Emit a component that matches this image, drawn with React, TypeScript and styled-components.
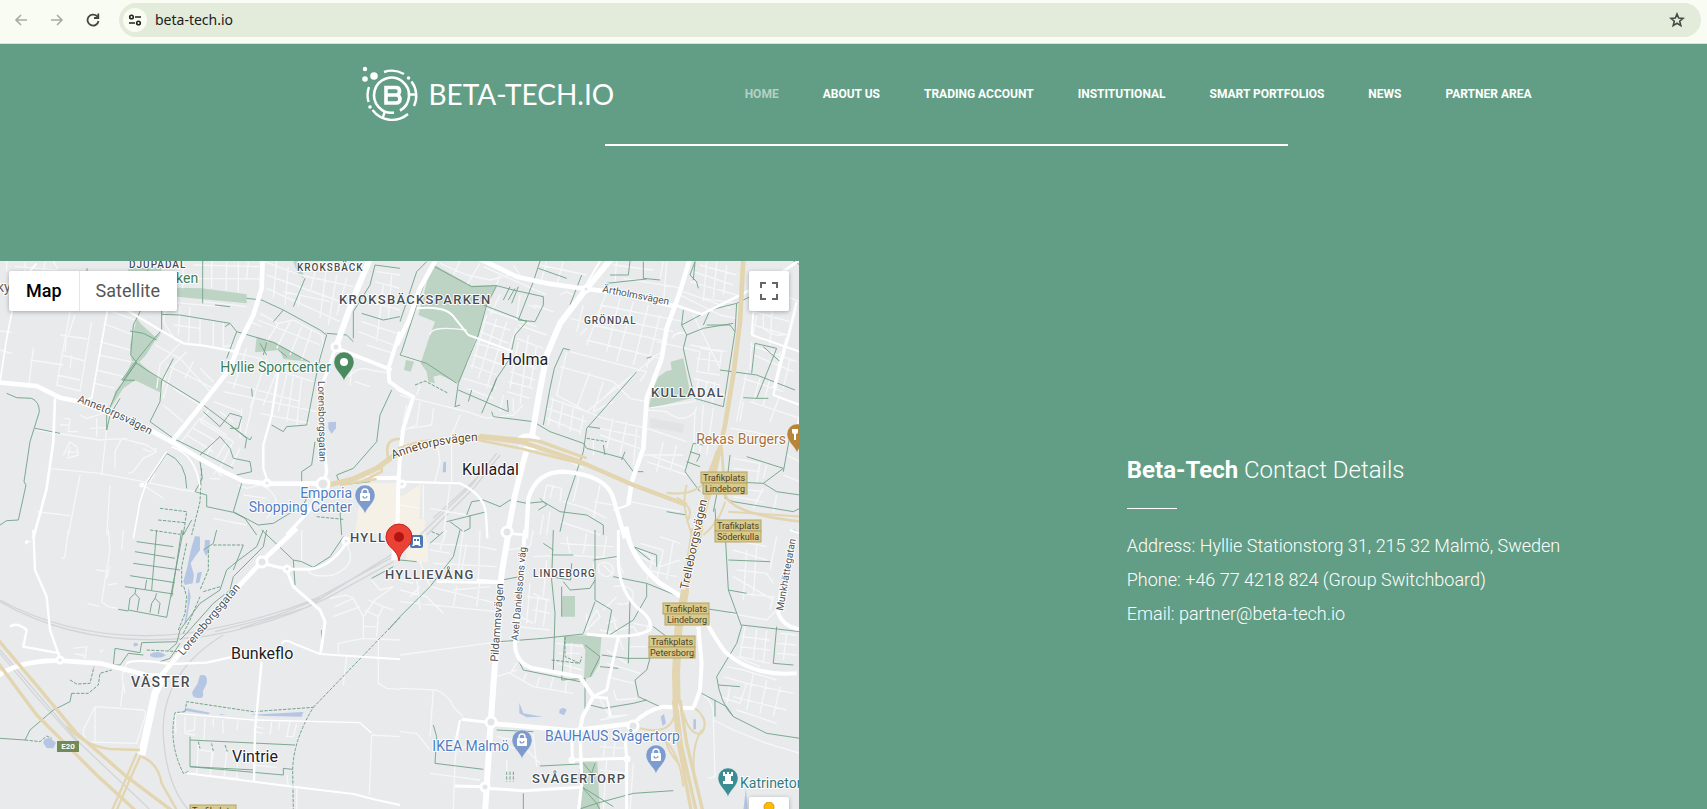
import React from 'react';
import styled, { createGlobalStyle } from 'styled-components';

const GlobalStyle = createGlobalStyle`
  * { box-sizing: border-box; }
  body { margin: 0; background: #629e85; font-family: Roboto, "Liberation Sans", sans-serif; }
  button { border: 0; padding: 0; background: none; font: inherit; cursor: pointer; }
  a { color: inherit; text-decoration: none; }
`;

const Page = styled.div`
  display: flex;
  flex-direction: column;
  min-height: 100vh;
`;

/* Browser bar */

const BrowserBar = styled.div`
  display: flex;
  align-items: center;
  height: 44px;
  padding: 0 6px 4px 8px;
  background: #f9fcf2;
  border-bottom: 1px solid #dbe5d6;
`;

const BarButton = styled.button<{ $muted?: boolean }>`
  display: grid;
  place-items: center;
  width: 26px;
  height: 28px;
  margin-right: 10px;
  color: ${(p) => (p.$muted ? '#a5aca0' : '#3f4a3c')};
`;

const AddressBar = styled.div`
  display: flex;
  flex: 1;
  align-items: center;
  height: 34px;
  margin-left: 3px;
  padding: 0 12px 0 4px;
  border-radius: 17px;
  background: #e3ebdb;
`;

const SiteInfo = styled.button`
  display: grid;
  place-items: center;
  width: 24px;
  height: 24px;
  border-radius: 50%;
  background: #f9fcf2;
`;

const AddressInput = styled.input`
  flex: 1;
  min-width: 0;
  margin-left: 8px;
  padding: 0;
  border: 0;
  outline: 0;
  background: transparent;
  color: #1c211b;
  font: 14px/20px "Noto Sans", "Open Sans", sans-serif;
`;

const StarButton = styled.button`
  display: grid;
  place-items: center;
  width: 24px;
  height: 24px;
`;

/* Site header */

const Header = styled.header`
  display: flex;
  flex-direction: column;
  align-items: center;
  padding-left: 186px;
  height: 217px;
`;

const HeaderRow = styled.div`
  display: flex;
  align-items: center;
  justify-content: space-between;
  width: 100%;
  max-width: 1170px;
  height: 100px;
`;

const Brand = styled.a`
  display: flex;
  align-items: center;
  gap: 9px;
  color: #fff;
  font: 28px/60px Lato, sans-serif;
`;

const Nav = styled.nav`
  display: flex;
  gap: 44px;
`;

const NavLink = styled.a<{ $active?: boolean }>`
  color: ${(p) => (p.$active ? '#b5d0c4' : '#fff')};
  font-size: 12px;
  line-height: 20px;
  font-weight: 700;
  text-transform: uppercase;
  white-space: nowrap;
`;

const HeaderRule = styled.hr`
  width: 40vw;
  height: 2px;
  margin: 0;
  border: 0;
  background: #fff;
`;

/* Map and contact */

const Main = styled.main`
  display: grid;
  grid-template-columns: 799fr 908fr;
  flex: 1;
  min-height: 400px;
`;

const MapPanel = styled.section`
  position: relative;
  overflow: hidden;
  background: #e8eaec;
`;

const MapSvg = styled.svg`
  position: absolute;
  inset: 0;
  width: 100%;
  height: 100%;
  font-family: Roboto, sans-serif;
`;

const MapTypes = styled.div`
  position: absolute;
  top: 10px;
  left: 9px;
  display: flex;
  border-radius: 2px;
  background: #fff;
  box-shadow: 0 1px 4px rgba(0, 0, 0, 0.3);
`;

const MapTypeButton = styled.button<{ $active?: boolean }>`
  height: 40px;
  padding: 0 17px 2px;
  color: ${(p) => (p.$active ? '#000' : '#565656')};
  font-size: 18px;
  font-weight: ${(p) => (p.$active ? 500 : 400)};
  & + & {
    padding-left: 16px;
    border-left: 1px solid #e6e6e6;
  }
`;

const MapControl = styled.button<{ $top?: boolean }>`
  position: absolute;
  right: 10px;
  ${(p) => (p.$top ? 'top: 10px;' : 'bottom: -28px;')}
  display: grid;
  place-items: center;
  width: 40px;
  height: 40px;
  border-radius: 2px;
  background: #fff;
  box-shadow: 0 1px 4px rgba(0, 0, 0, 0.3);
`;

const Contact = styled.section`
  padding: 192px 24px 0 36.1%;
  color: #fff;
  font-weight: 300;
`;

const ContactTitle = styled.h2`
  margin: 0;
  font-size: 24px;
  line-height: 34px;
  font-weight: 300;
  strong { font-weight: 700; }
`;

const ContactRule = styled.hr`
  width: 50px;
  height: 1px;
  margin: 21px 0 20px;
  border: 0;
  background: #fff;
`;

const ContactLine = styled.p`
  margin: 0;
  font-size: 18px;
  line-height: 34px;
`;

/* Map data: each tile is drawn on its own 1200-unit grid */

type Stroke = [width: number, d: string];
interface Tile {
  x: number;
  y: number;
  parks: string[];
  water: string[];
  rail: string[];
  paths: string[];
  dashed: string[];
  minor: string[];
  roads: Stroke[];
  highways: Stroke[];
}

const tiles: Tile[] = [
  {
    x: 0,
    y: 255,
    parks: [
      'M530 98 L605 100 L740 118 L740 145 L530 125Z',
      'M385 38 L485 38 L480 60 L385 60Z',
      'M410 195 L470 250 L438 300 L418 322 L395 318 L390 270Z',
      'M395 322 L418 322 L445 345 L485 378 L480 412 L405 376 L370 400 L330 462 L345 410 L368 380Z',
      'M410 190 L425 210 L400 300 L392 270Z M485 232 L468 256 L458 250Z',
      'M770 245 L825 262 L930 320 L850 312 L840 285 L765 292Z',
      'M890 15 L905 35 L912 70 L895 60 L880 20Z',
    ],
    water: ['M985 502 L1008 500 L1008 520 L995 536 L985 522Z'],
    rail: [],
    paths: [
      'M20 415 L50 428 L95 430 Q118 440 118 470 L90 560 L72 680 L78 690 L55 795 L20 797 L0 810',
      'M445 18 L440 130 L400 210 L392 300 L410 322 L350 410 L320 480 L320 525 L330 480 L360 430',
      'M485 60 L485 225 L455 260 L405 322 L440 345 L610 450 L690 510 L750 555 L755 545',
      'M485 178 L540 180 L690 205 L710 230 L820 262 L930 322',
      'M740 130 L785 135 L850 165 L960 225 L980 240 L960 310 L945 380 L920 510 L860 515 L850 530 L815 510',
      'M980 235 L1040 240 L1060 260 M850 165 L820 200',
      'M915 70 L880 155 M1125 30 L1110 90 L1060 170 L1060 250 M1125 30 L1200 40',
      'M1085 175 L1150 195 L1200 185',
      'M485 378 L520 310 M485 378 L480 440 L450 500 L520 550 L700 640',
      'M610 470 L660 515 L690 475 L725 485 L715 520 L690 520 M690 510 L740 550 L735 580',
      'M600 600 L660 545 L690 580 L700 610 L750 620 L755 650 L710 660',
      'M1175 405 L1140 480 L1130 560 L1060 640 L1010 660 L1020 690 L1110 680',
      'M945 560 L935 630 L905 650 L905 680',
      'M500 595 L440 685 M500 595 Q560 620 560 700 M725 685 L700 770 L775 810 L820 805 L910 750 L930 710',
      'M600 620 L607 670 L585 710 L620 720 L620 755 L700 772 L735 790 L770 840 M105 520 L180 535',
      'M710 230 L680 310 M690 205 L675 215 M410 322 L370 375 M405 322 L365 375 L405 376',
      'M755 400 L757 425 M608 18 L608 145 M262 40 L258 60 M390 228 L430 235 L470 255',
      'M780 265 L800 300 M835 285 L860 305 M800 262 L790 300',
      'M575 795 L550 840 M645 150 L690 155 M1020 770 L1025 840',
    ],
    dashed: [
      'M605 640 L600 740 L575 840 M480 760 L560 770 L550 840 M475 795 L555 803 M450 825 L540 838',
      'M950 785 L1030 793',
    ],
    minor: [
      'M0 228 L35 232 M0 285 L35 295 M210 170 L170 390 L240 408 L275 200 M180 240 L262 252 M185 300 L255 318 M172 360 L240 375 M225 180 L205 240 M90 315 L190 330',
      'M200 240 L195 290 M215 300 L210 340 M100 280 L85 400 M20 18 L20 50 M45 35 L170 45 M75 20 L75 48 M135 20 L130 48 M160 18 L175 45',
      'M310 205 L400 240 M300 260 L390 285 M295 300 L390 320 M290 345 L370 365 M285 385 L345 400 M335 170 L405 195',
      'M530 70 L790 72 M510 20 L505 45 M550 18 L548 100 M635 18 L635 100 M680 20 L678 105 M715 20 L715 110 M745 20 L740 75 M610 140 L740 155 M580 30 L780 35',
      'M500 150 L490 200 L530 260 M540 150 L535 240 M570 155 L565 265 M600 190 L600 270 M640 195 L640 272 M490 140 L660 155 M670 200 L670 275 L700 270 M520 210 L600 220',
      'M780 175 L835 205 L880 195 L965 240 L970 265 L955 330 M835 205 L800 260 M870 200 L830 280 M905 215 L870 300 M935 225 L905 315 M775 195 L960 270 M750 200 L785 215',
      'M795 20 L900 60 L1060 95 M800 60 L1050 150 M830 18 L820 130 M865 35 L855 150 M950 30 L930 110 M980 30 L960 190 M1010 60 L985 210 M1040 70 L1010 180 M800 100 L1020 200 M850 110 L990 140 M900 100 L895 155',
      'M1110 140 L1200 165 M1125 80 L1200 100 M1085 200 L1190 235 M1075 230 L1180 270 M1130 50 L1200 60 M1150 90 L1130 260 M1175 60 L1165 190 M1100 270 L1180 295',
      'M690 290 L780 310 L830 345 L940 380 M700 320 L690 350 M740 280 L700 400 M800 310 L750 460 M830 350 L790 450 M860 360 L835 470 M880 365 L860 500 M905 370 L890 510 M670 410 L950 470 M640 440 L720 470 M680 380 L900 440 M660 470 L700 500 M725 460 L720 550 M765 420 L735 540 M780 475 L930 505',
      'M560 290 L520 330 L490 430 M540 265 L480 330 L470 400 M500 330 L640 400 M580 320 L555 370 M600 340 L640 380 M520 400 L600 450 M490 450 L550 500 M500 350 L480 420 M540 310 L630 410 M465 270 L540 310',
      'M540 565 L600 490 L680 540 M560 540 L640 590 M580 520 L650 560 M600 500 L700 560 L660 640 M620 600 L640 560 M650 610 L680 560 M690 640 L720 580 M630 460 L600 500',
      'M240 480 L260 490 L310 475 M190 490 L210 492 L205 530 L235 530 M180 510 L205 510 M110 525 L300 555 L380 550 M290 490 L290 545 M270 520 L320 518',
      'M190 600 L210 560 L230 575 L235 600 L200 610 M200 590 L230 592 M210 575 L205 605 M320 520 L305 660 M145 640 L300 655 L430 680 L550 705 L600 712 M365 550 L345 590 L345 640 M365 550 L440 570 L470 590 L430 610 L400 650 L385 655 M430 580 Q450 600 470 580',
      'M110 770 L210 782 M240 660 L205 840 M330 690 L320 840 M640 660 L650 645 L665 665 M630 670 L660 672 M715 690 L740 700 L780 690 Q830 710 830 750 L800 790 M800 730 L730 720 M465 655 L450 680 M430 690 L490 730',
      'M640 790 L740 810 M1060 300 L1050 390 M1065 380 L1110 395 M1045 365 Q1080 330 1110 345 L1170 355',
    ],
    roads: [
      [14, 'M-10 382 L110 393 L180 428 L240 440 L440 520 L520 563 L590 605 L660 645 L730 678 L800 686 L950 686'],
      [14, 'M788 10 L785 100 L760 180 L720 260 L690 340 L620 430 L515 560'],
      [18, 'M1110 10 L1060 130 L1008 275'],
      [10, 'M1008 275 L985 340 L962 400 L970 560 L980 650 L970 690 L925 770 L860 840'],
      [12, 'M1010 280 L1100 315 L1175 345 M1200 230 L1165 340 L1168 380 L1210 410'],
      [5, 'M50 100 L20 250 L0 380 M325 150 L275 430 M110 25 L45 100 M265 430 L275 430'],
      [8, 'M165 430 L160 560 L140 700 L100 850'],
      [7, 'M380 165 L480 225 L550 265 L610 272 L710 290'],
      [7, 'M835 350 L815 480 L790 570 L790 640 L805 685'],
      [5, 'M515 575 Q590 600 600 700 M500 590 L440 680 L420 740 L400 850'],
      [12, 'M1195 685 L1192 850 M1100 670 L1200 668'],
    ],
    highways: [
      [16, 'M985 690 L1060 672 L1130 640 L1210 582'],
      [8, 'M1090 678 L1145 650 L1145 635 M1165 610 Q1150 550 1200 552 M1020 690 L1130 672'],
    ],
  },
  {
    x: 400,
    y: 255,
    parks: [
      'M95 25 L215 92 L290 90 L255 160 L235 240 L175 385 L120 360 L100 365 L105 385 L85 380 L80 350 L62 325 L90 240 L105 200 L55 180Z',
      'M18 315 L42 320 L32 350 L12 345Z',
      'M812 320 L850 310 L868 400 L872 430 L745 462 L760 400 L775 365 L800 348 L815 345Z',
    ],
    water: ['M130 622 L138 620 L138 652 L128 652Z'],
    rail: ['M290 595 L215 690 L60 840 M300 600 L225 695 L80 840 M235 665 L100 790'],
    paths: [
      'M80 20 L50 50 L0 200 M95 30 L215 95 L290 92 L340 105 L430 125 L430 150 L405 200 L355 195 L400 80 L420 18',
      'M95 30 L60 120 L5 290 L0 300 M290 92 L260 150 L235 240 L175 385 L165 455',
      'M0 300 L80 325 L170 385 M250 150 L380 200 L345 240 L330 310 L290 370 L245 475',
      'M330 95 L310 135 M345 100 L325 135 M355 95 L335 145 M415 40 L500 70',
      'M175 405 L325 470 L322 435 M275 470 L280 485 L400 500 L450 530 L550 565 L560 580 L670 610 L700 650 L730 650',
      'M490 280 L463 340 L450 400 L430 510 M490 280 L510 285 M710 350 L560 520 L550 590 L500 740',
      'M545 60 L510 150 M690 18 L685 60 L630 60 M730 20 L730 70 L780 75 M885 20 L870 60 L890 80 L895 100 M885 20 L880 75',
      'M850 165 L845 210 L860 240 L850 280 L865 350 L885 430 L970 455 L1005 230 L990 210 L920 210',
      'M860 240 L910 220 L1000 205 M845 210 L930 165 L1010 145 L1050 125 M1010 145 L1005 230 M930 165 L910 210',
      'M960 345 L1070 360 L1185 405 M1065 265 L1055 355 M1065 265 L1130 280 L1070 430 L1030 428 M1070 430 L1105 430 M1090 275 L1140 320',
      'M880 565 L855 650 L900 710 M880 565 L910 570 M870 590 L900 600 L890 620 M860 620 L900 635',
      'M990 600 L975 730 L1000 740 L1180 770 M1040 605 L1150 640 L1090 685 L980 680 M1090 685 L1130 710 L1200 720 M1180 770 L1200 760 M1170 540 L1150 650',
      'M200 780 L215 740 L250 735 L300 755 L330 735 L380 745 L430 740 L480 770 L560 780 L610 810 L610 840 M140 800 L160 795 L260 770 M150 800 L190 830 L210 820 L210 780 M500 740 L480 830',
      'M420 730 L440 750 L415 765 M565 515 L600 520 M610 570 L615 600 M675 590 L665 615 M860 780 L800 770 M940 770 L950 720 M945 760 L950 840 M620 85 L740 72',
      'M215 405 L205 440 M180 450 L165 455 M290 370 L275 410 M740 310 L755 305 M1180 18 L1200 30',
    ],
    dashed: ['M45 390 L75 378 L145 415 M560 550 L620 560', 'M95 830 L120 840'],
    minor: [
      'M265 165 L410 215 M250 200 L330 225 M240 230 L325 265 M230 265 L320 290 M220 300 L310 330 M210 330 L290 360 M190 370 L290 400 M200 400 L280 430 M230 250 L200 330 M260 180 L215 340 M290 190 L235 370 M320 200 L260 400 M350 220 L310 330 M385 150 L410 160 M300 120 L270 180',
      'M355 210 L440 240 M350 250 L430 280 M340 320 L410 340 M330 350 L405 375 M325 380 L400 400 M320 410 L390 430 M355 260 L330 400 M385 240 L360 450 M310 420 L300 470 M340 430 L340 470 M410 270 L390 400 M370 300 L370 330',
      'M250 35 L440 120 M200 60 L270 75 L330 60 M180 18 L160 60 M240 25 L200 90 M300 60 L290 90 M120 25 L200 60 M340 30 L360 60 M440 20 L420 90 M490 20 L470 90 M420 30 L560 60 M0 140 L30 150 M400 150 L460 170 M480 120 L500 110 L520 120 M360 120 L350 190',
      'M600 150 L850 200 M590 180 L820 230 M580 210 L800 260 M560 255 L780 310 M510 290 L740 350 L720 380 M480 335 L640 380 L690 430 L740 440 M500 290 L470 420 L560 470 L610 490 L740 520 L860 560 M620 110 L560 270 M660 130 L620 290 M700 140 L650 320 M745 150 L700 330 M780 180 L740 340 M570 350 L530 460 M610 380 L580 470 L640 440 M650 390 L610 430 M560 470 L760 310',
      'M450 430 L560 470 M440 460 L560 500 M440 490 L540 530 M460 430 L445 510 M490 440 L475 520 M520 460 L510 530 M550 480 L540 540 M640 490 L620 580 M680 500 L660 600 M710 520 L700 630 M600 540 L720 580 M600 520 L720 545 M580 550 L580 600',
      'M540 240 L560 220 M530 230 L550 150 M510 190 L550 200 M640 30 L760 45 M650 18 L645 80 M790 20 L780 70 M670 70 L850 100 M800 20 L790 150 M840 120 L960 180 L1010 190 M770 260 L900 290 M820 240 L860 230 M790 290 L750 310 M815 250 Q840 220 860 240',
      'M880 180 L960 340 M900 30 L1010 60 M920 20 L910 140 M950 20 L940 130 M980 30 L970 120 M870 80 L1010 120 M850 110 L990 160 M880 50 L1000 90 M910 130 L1010 145',
      'M900 280 L965 290 L960 330 M900 290 L890 350 L960 360 M930 290 L925 350 M890 310 L960 320 M880 370 L960 390 M870 400 L980 420 M895 370 L885 440 M920 380 L910 440 M945 380 L935 450 M870 270 L980 290 M885 465 L880 590 M910 450 L900 590 M940 460 L920 600',
      'M1060 170 L1170 200 M1060 210 L1160 240 M1090 180 L1090 220 Q1120 245 1150 240 M1150 120 L1200 140 M1120 110 L1110 270 M1190 160 L1150 310 M1055 260 L1050 345 M1070 180 L1060 240 M1140 290 L1130 400 M1170 310 L1150 400 M1050 270 L1190 320 M1060 300 L1180 350 M1040 350 L1010 500 M1030 370 L1150 410 M1080 370 L1060 440 M1110 370 L1090 450 M1050 440 L1200 490 M1020 500 L1030 440 M1140 420 L1110 500 M990 520 L1060 530 L1160 560',
      'M1000 610 L1080 625 L1070 680 M1000 640 L1080 650 M1100 630 L1090 670 M1130 720 L1120 770 M1010 700 L1090 710 M1000 725 L1090 740 M1160 600 L1200 620 M1150 660 L1200 680 M1090 700 L1060 760 M740 465 L800 470 Q850 510 885 470 L890 455 M740 460 L880 440 M750 600 L860 640 M740 620 L860 660 M790 560 L770 650 M830 570 L810 650 M730 600 L850 600',
      'M40 430 L200 470 L260 490 L340 480 L370 450 M60 440 L50 510 L0 530 M100 460 L95 510 L30 520 M180 480 L155 540 L155 680 M110 560 L120 620 L105 680 M20 450 L10 500 M430 580 L550 640',
      'M440 690 L430 740 M460 690 L450 730 M490 740 L560 760 L620 790 M540 650 L520 740 M600 690 L580 790 M440 690 L485 700 L480 740 M580 740 L640 750 M430 780 L420 840 M450 770 L440 840 M480 800 L600 840 M0 750 L60 760 M70 690 L70 790 M150 690 L130 840 M90 760 L200 780 M690 740 L840 770',
      'M0 300 L60 320 M0 420 L30 430 M90 240 Q90 210 200 225 M60 390 L50 420',
    ],
    roads: [
      [14, 'M110 10 L60 100 L25 200 L-10 270'],
      [14, 'M240 12 L350 65 L440 85 L560 102 L650 112 L830 155'],
      [18, 'M635 10 L560 100 L480 205 L440 300 L415 430 L395 550'],
      [17, 'M383 575 L370 620 L345 720 L320 850'],
      [12, 'M357 550 Q388 530 418 555 M355 578 Q385 590 408 578'],
      [6, 'M605 10 L555 95 M50 160 Q140 150 165 190 L205 240 L340 290'],
      [14, 'M870 10 L840 110 L800 220 L785 310 L740 430 L730 580 L695 680 L685 750'],
      [13, 'M378 850 L385 730 Q410 650 490 650 Q620 660 640 730 L675 850'],
      [12, 'M-10 400 L40 425 L10 520 L0 600 L-5 690'],
      [7, 'M-5 680 L180 685 Q255 720 258 780 L262 850 M640 765 L685 750'],
      [8, 'M825 150 L905 178 L1060 100 L1140 55 L1200 15'],
      [6, 'M1055 240 L1200 290 M1190 140 L1120 420 L1200 450 M1055 240 L1060 170 M1200 480 L1180 560 M1160 250 L1120 400'],
    ],
    highways: [
      [14, 'M1030 10 L1020 200 L1000 360 L975 510 L935 690 L890 850'],
      [13, 'M-5 583 L60 562 L230 545 L370 562 L540 620 L700 690 L820 735 L860 750'],
      [8, 'M240 540 L420 558 L560 610 M220 552 L360 580 L560 630 M950 590 L920 700 L900 850 M965 580 L975 720 Q1000 780 1210 800'],
      [6, 'M400 555 L540 605 M800 713 Q880 725 915 680 L955 580 M860 690 Q840 750 880 850 M830 728 Q890 760 860 800 M975 740 Q960 800 910 840 M985 770 L1210 785'],
    ],
  },
  {
    x: 0,
    y: 530,
    parks: [],
    water: [
      'M585 18 L600 20 L600 60 L585 80 L572 100 L582 135 L578 160 L555 165 L550 155 L562 110 L568 80 L575 50Z',
      'M615 30 L630 30 L628 60 L618 78 L612 65Z M592 128 L606 125 L598 158 L587 160Z',
      'M600 436 Q625 430 620 460 L608 485 Q615 505 595 504 Q575 505 577 485 L592 462Z',
      'M450 372 Q475 358 498 376 Q475 390 450 378Z M400 340 Q415 335 415 346 L402 350Z',
      'M558 534 L630 548 L625 553 L558 543Z M750 554 L910 546 L905 560 L800 558Z M660 552 L680 554 L660 555Z',
      'M130 640 Q130 622 150 625 L168 638 L160 655 L140 654Z',
      'M565 170 L572 200 L560 270 L552 285 L562 230Z',
    ],
    rail: [
      'M0 210 Q250 345 560 310 Q800 270 960 200 L1180 80 M0 215 Q260 365 620 318 Q800 290 980 205 L1180 95',
      'M670 315 Q480 430 490 620 Q500 770 570 845 M645 305 L820 260 L960 205 M720 295 L920 232 L1180 70',
      'M0 360 L240 640 L430 820 L450 840 M0 370 L100 490 L235 640',
    ],
    paths: [
      'M0 625 L75 630 L90 600 L160 540 L210 515 L215 490 M375 170 L520 192 M405 65 L525 85 M400 100 L540 120 M390 137 L525 158 M470 0 L455 180 M440 150 L435 180 M550 0 L500 262 L385 240 L390 205 L405 190 L418 205 L412 242 M450 248 L455 220 L465 205 L480 220 L475 252',
      'M545 0 L515 200 M410 35 L520 50 M355 238 L385 243 M405 190 L408 175 M465 205 L470 190',
      'M790 0 L770 50 L710 95 L680 120 L660 180 L600 220 L540 300 L530 340 L505 362 M800 0 L790 50 L700 140 L690 180 L640 220 L560 310 L540 330',
      'M785 0 L880 90 L885 165 M880 90 L905 95 L940 112 L990 80 L1030 20 M965 300 L965 370',
      'M345 355 L420 368 L425 338 L530 335 M345 355 L340 405 L360 405 L385 370 L430 375 M480 395 L510 385 L540 340',
      'M570 620 L570 710 L850 735 L850 715 L878 718 M570 630 L885 645 M570 710 L765 720',
      'M1115 145 L1180 110 M1200 260 L1165 300 M650 0 L640 40 L610 60 M730 45 L700 120',
    ],
    dashed: [
      'M560 40 L545 110 L545 170 M640 45 L730 45 M625 60 L625 120 L600 180 M535 300 L555 250 L560 200 L550 165 M550 310 L570 270 L600 200 M610 185 L660 170',
      'M555 545 L560 515 L760 545 L940 532 Q880 630 878 720 L880 840 M555 545 L525 548 Q505 640 550 730 L565 725',
      'M940 532 L1200 262 M440 360 L540 365 M210 450 L230 462 L270 460 L282 410 M215 490 L265 490 L295 465 L300 430 L335 420 M75 630 L120 635 L140 618 L155 625',
      'M595 635 L600 655 M635 640 L640 665 M675 645 L682 665',
    ],
    minor: [
      'M75 38 L95 35 M205 0 L195 80 L185 88 M325 0 L330 60 L305 215 L325 230 L352 235 M330 110 L320 145 M290 120 L325 125 M325 165 L350 160 M262 220 L300 230 M370 0 L365 60',
      'M285 530 L430 540 Q440 545 435 560 L410 640 L265 636 Q250 625 250 600 L285 530 L285 635 M380 400 Q360 440 370 460 L362 530 M370 460 L375 490',
      'M220 355 L260 350 L255 385 L250 375 L225 372 M300 365 L310 360',
      'M555 560 L555 610 L585 615 M585 560 L583 600 L560 605 M615 565 L612 630 M640 565 L640 590 M668 570 L670 610 M715 572 L710 600 M815 575 L810 615 M870 575 L860 620 L880 620 L890 580 M765 590 L790 595 M765 605 L790 610 M595 640 L590 735 M638 640 L630 735 L640 665 L600 660 M680 665 L672 742 M715 660 L710 745 M560 730 L720 745 M760 705 L830 712 M525 550 L528 610 M840 575 L835 600',
      'M990 205 L1040 195 L1060 205 L1005 230 M1060 205 L1090 260 L1090 325 L1200 330 M1015 370 L1015 340 L1090 325 M1090 260 L1125 210 L1180 170 M1105 210 L1150 230 L1135 260 L1095 240 M1135 260 L1130 320 M1040 380 L1030 465 M1135 330 L1135 460 L1160 475 L1200 478 M1090 290 L1130 290 M1115 150 L1140 180 L1180 170 M1180 240 L1150 230 M1000 260 L1080 230 M905 0 L905 95 M925 120 Q930 145 1000 135 Q1060 110 1050 70 L1040 40',
      'M1115 615 L1200 620 M1115 615 L1108 795 M860 735 L865 770 M890 775 L890 840',
    ],
    roads: [
      [7, 'M100 0 L105 120 L140 200 L150 300 L180 385 M30 290 Q50 275 80 300 L70 350 L180 370 M85 35 Q75 30 80 42'],
      [14, 'M-10 440 Q60 390 180 392 L300 400 L440 435 L500 440'],
      [14, 'M890 -5 L790 90 L640 250 L510 405 L480 440'],
      [22, 'M490 440 L465 490 L425 675'],
      [7, 'M510 402 L620 398 L700 380 M380 400 Q400 385 510 402'],
      [9, 'M785 100 L860 117 L930 118 Q990 110 1035 45 M860 120 L880 170 L960 240 L975 275 L962 370'],
      [6, 'M845 340 Q855 325 880 340 L960 372 L1200 388'],
      [7, 'M785 395 L765 600 L762 755'],
      [4, 'M530 550 L760 570 L1080 578 L1115 610'],
      [6, 'M560 730 L880 770 L1060 792 L1130 810 L1200 825'],
      [16, 'M1185 0 L1182 90'],
    ],
    highways: [
      [10, 'M-5 330 L130 490 L230 610 L380 740 L520 845 M-5 400 L110 555 L290 735 L410 845'],
      [7, 'M200 590 Q260 650 330 657 L420 660 M425 680 Q475 700 485 760 L530 840'],
      [7, 'M410 670 L376 750 L332 850 M422 676 L388 752 L346 850'],
    ],
  },
  {
    x: 400,
    y: 530,
    parks: [
      'M487 198 L525 198 L525 260 L485 260Z',
      'M495 318 L605 315 L598 400 L575 440 L552 448 L556 360 L548 342 L495 340Z',
      'M545 695 L592 695 L595 760 L600 840 L535 840Z',
    ],
    water: [
      'M358 518 L370 550 L428 560 L380 562 L358 550Z M478 540 Q490 528 500 540 L492 556 L478 550Z',
      'M782 560 L792 552 L798 580 L788 588Z M880 568 L888 568 L888 598 L880 598Z M1038 775 L1043 840 L1030 840Z',
    ],
    rail: [],
    paths: [
      'M90 40 L130 5 M0 90 L50 95 M0 260 L90 170 L160 80 L180 0 M300 335 L430 325 L550 312 M345 370 L370 420 L540 455 M305 150 L360 140',
      'M460 0 L455 150 L465 250 L460 420 M455 75 L520 75 M485 170 L485 260 M515 100 L512 150 L450 140 M585 0 L585 210 L635 240 L620 320 L700 270 L740 200 L740 160 M490 155 L510 180 L570 175 L585 150',
      'M585 215 L550 310 M555 345 L600 380 L570 440 M605 375 L680 385 L750 385 L740 420 L705 450 L715 500 L780 530 M690 210 L685 400 M600 410 L655 415 M555 540 L555 445 L485 450 L495 320 M570 525 L610 535 L700 520 L740 510',
      'M685 15 L700 50 L770 75 L770 110 M700 50 L750 90 M760 290 L800 320 M740 160 L850 205 M580 90 L650 80',
      'M975 0 L985 180 L1025 290 L1010 340 L950 440 Q960 520 1000 560 L1100 610 L1200 625 M925 237 L1010 250 M1025 285 L1200 305 M985 180 L1040 190 M985 90 L1110 95 M905 490 L980 530 L1000 560 M945 510 L945 560 M955 465 L1020 470',
      'M1130 290 L1120 400 L1180 405 M100 585 L110 620 L105 700 L250 718 M290 600 L400 605 M420 708 L540 702 M545 770 L590 820 L700 790 L820 782 M590 820 L600 840 M590 820 L530 840 M550 700 L575 730 L585 700 M370 790 L370 840',
      'M545 770 L640 830 M640 140 L740 160 M430 40 L460 60 M1180 0 L1200 10',
    ],
    dashed: ['M495 320 L495 380 L540 400 L545 380 M320 725 L320 755 M330 725 L330 755 M340 725 L340 755', 'M455 390 L540 400 M545 700 L530 760'],
    minor: [
      'M90 40 L240 50 L290 60 M60 95 L90 170 L290 220 M0 215 L290 245 M100 100 L290 110 M140 0 L120 60 M240 0 L235 150 M190 0 L170 150 M90 60 L150 70 M60 170 L30 200 M0 180 L80 200 L130 250 M200 40 L180 150 M50 140 L60 240 M0 150 L40 160 M270 170 L160 180 M170 170 L160 230 M240 150 L230 230',
      'M0 375 L260 340 L330 335 M0 475 L110 480 Q150 500 160 530 L190 560 M100 480 L90 620 M180 570 L165 690 L160 840 M0 605 L50 610 L90 660 M180 650 L250 660 M165 770 L255 770 M90 730 L240 750',
      'M320 650 L380 660 L420 700 M320 690 L320 740 M290 620 L400 640 M350 400 L330 430 L400 470 L520 490 M380 430 L370 450 M420 440 L410 470 M460 440 L450 480 M500 450 L495 490 M290 440 L350 420',
      'M400 0 L390 50 L320 60 M400 80 L500 75 L650 85 L670 130 M440 90 L430 200 M600 100 Q640 90 640 130 Q620 150 600 130 Q590 110 600 100 M610 105 L635 130 M640 170 Q700 160 700 200 Q690 230 650 220 M500 20 L510 70 M560 10 L550 70 M620 20 L610 80 M480 40 L640 50 M580 100 L580 140',
      'M400 280 L360 260 M400 190 L440 210 L430 290 M380 200 L450 210 M400 240 L450 250 M390 160 L380 280 M415 200 L405 280 M350 290 L450 300 M550 310 Q570 270 590 240 L600 260 L560 300 M640 260 L650 300 L700 290 L720 320 M620 280 L650 270 M600 300 L650 310 M700 280 L750 290 M720 240 L750 270 L740 300 M610 240 L650 200',
      'M655 320 L670 360 M690 350 L740 350 M620 360 L680 400 M620 400 L720 430 M620 440 L700 460 M470 340 L550 350 M475 370 L540 370 M475 400 L545 420 M515 340 L510 430 M600 510 L630 560 M640 480 L650 510 L710 505 M560 300 L560 250',
      'M690 50 L740 70 L760 90 M700 70 L780 110 L840 90 M720 40 L790 60 M740 120 L830 140 M760 80 L740 150 M790 60 L770 150 M820 30 L800 150 M780 20 L840 40',
      'M1000 30 L1100 50 M1010 120 L1100 130 L1120 160 M1000 60 L1100 90 M1000 140 L1120 210 M1020 190 L1120 200 L1110 240 M1040 60 L1030 210 M1070 50 L1060 200 M1130 20 L1110 120 M990 250 L1100 270 L1130 240',
      'M1035 290 L1020 380 L1110 400 M1070 295 L1060 390 M1100 300 L1090 400 M1025 320 L1110 330 M1020 350 L1110 360 M1140 310 L1190 315 M1130 340 L1190 345 M1130 370 L1190 375 M1160 310 L1150 390 M1010 380 L1080 410',
      'M980 410 L1030 420 L1130 450 M970 440 L1040 460 L1020 520 L960 500 M1040 460 L1180 490 M1060 430 L1040 540 M1100 450 L1080 550 M1140 470 L1120 560 M1000 500 L1160 540 M1010 540 L1130 580 M990 470 L980 520',
      'M910 495 Q945 520 940 570 L1000 600 L1100 640 L1200 670 M940 570 L945 740 L925 745 M620 560 L680 555 L600 570 M400 610 L410 710 M620 600 L610 680 M650 600 L640 680 M600 650 L670 655 M600 720 L680 730 M620 690 L610 840 M700 700 L690 840 M420 740 L540 745',
    ],
    roads: [
      [18, 'M328 -5 L305 130 L285 400 L272 580 L255 850'],
      [8, 'M320 10 L380 15 L375 0 M230 150 L295 155 M110 155 L295 158'],
      [12, 'M375 0 L350 280 L345 340 Q345 400 400 415 L540 440 L580 500 L548 560 L540 600'],
      [10, 'M540 590 L545 760 L535 850'],
      [15, 'M678 -10 Q690 85 780 160 L860 210'],
      [9, 'M655 0 L655 100 Q660 190 720 240 Q760 270 750 300 Q700 330 560 312 M655 320 L620 480 L580 500 L620 505'],
      [12, 'M915 270 Q960 350 980 370 Q1060 440 1190 430 M1145 170 L1135 250 Q1150 290 1200 298'],
      [12, 'M895 290 L905 400 L900 480 L880 535 L790 530 Q740 540 700 580'],
      [14, 'M270 580 L520 602 L700 580'],
      [9, 'M275 578 L185 568 M255 770 L165 768 M515 595 L517 690 L680 685 L675 620 M680 685 L680 840 M255 775 L370 782 L545 772'],
      [6, 'M620 500 L632 560 M180 570 L165 640 M1200 10 L1170 0'],
    ],
    highways: [
      [12, 'M905 -5 L870 120 L850 250 M880 -5 L855 150'],
      [24, 'M855 180 L835 300 L828 430 L830 520'],
      [10, 'M828 510 L845 650 L890 850 M840 510 L860 640 L910 850 M820 510 L835 640 L875 850'],
      [6, 'M720 595 Q820 620 825 540 M820 610 Q770 620 835 700 M885 535 Q930 570 905 610 Q870 620 850 550 M905 600 Q870 650 885 760 M800 635 Q840 680 850 770'],
    ],
  },
];

const roundabouts = [
  [336, 347, 5], [323, 484, 7], [402, 484, 4], [262, 562, 6], [287, 569, 4], [346, 541, 4], [507, 532, 6],
  [586, 289, 4], [491, 722, 6], [485, 787, 5], [633, 726, 6], [60, 660, 4], [572, 760, 3], [627, 759, 3],
  [142, 485, 2], [267, 483, 4],
];

const MapTile = ({ tile }: { tile: Tile }) => (
  <g transform={`translate(${tile.x} ${tile.y}) scale(${1 / 3})`} fill="none" strokeLinejoin="round">
    <path d={tile.parks.join('')} fill="#bdd4c5" />
    <path d={tile.water.join('')} fill="#b5c6e5" />
    <path d={tile.rail.join('')} stroke="#d3d5d7" strokeWidth={4} />
    <path d={tile.minor.join('')} stroke="#f6f7f8" strokeWidth={4} />
    <path d={tile.paths.join('')} stroke="#74a489" strokeWidth={2.8} />
    <path d={tile.dashed.join('')} stroke="#74a489" strokeWidth={3} strokeDasharray="10 4" />
    {tile.roads.map(([w, d]) => <path key={d} d={d} stroke="#fff" strokeWidth={w} />)}
    {tile.highways.map(([w, d]) => <path key={d} d={d} stroke="#e2d5af" strokeWidth={w} />)}
  </g>
);

const MapText = styled.text<{ $size: number; $color?: string; $weight?: number; $spaced?: boolean }>`
  font-size: ${(p) => p.$size}px;
  font-weight: ${(p) => p.$weight ?? 400};
  fill: ${(p) => p.$color ?? '#3c4043'};
  letter-spacing: ${(p) => (p.$spaced ? '0.1em' : 'normal')};
  stroke: #fff;
  stroke-width: 2px;
  stroke-linejoin: round;
  paint-order: stroke;
`;

const districts: [string, number, number, number][] = [
  ['DJUPADAL', 129, 268, 10], ['KROKSBÄCK', 297, 271, 10], ['KROKSBÄCKSPARKEN', 339, 304, 13],
  ['GRÖNDAL', 584, 324, 10], ['KULLADAL', 651, 397, 13], ['HYLLIE', 350, 542, 13],
  ['HYLLIEVÅNG', 385, 579, 13], ['LINDEBORG', 533, 577, 10], ['VÄSTER', 131, 687, 14],
  ['SVÅGERTORP', 532, 783, 13],
];

const towns: [string, number, number][] = [
  ['Holma', 501, 365], ['Kulladal', 462, 475], ['Bunkeflo', 231, 659], ['Vintrie', 232, 762],
];

const places: [string, number, number, string, 'start' | 'end'][] = [
  ['ken', 176, 283, '#3c7d55', 'start'], ['Hyllie Sportcenter', 331, 372, '#3c7d55', 'end'],
  ['Emporia', 352, 498, '#4f7cc0', 'end'], ['Shopping Center', 352, 512, '#4f7cc0', 'end'],
  ['Rekas Burgers', 786, 444, '#a9703a', 'end'], ['IKEA Malmö', 509, 751, '#4f7cc0', 'end'],
  ['BAUHAUS Svågertorp', 545, 741, '#4f7cc0', 'start'], ['Katrinetorp', 740, 788, '#2f7d83', 'start'],
  ['ky', -3, 292, '#5f6368', 'start'],
];

const streets: [string, number, number, number, number, string?][] = [
  ['Ärtholmsvägen', 602, 292, 11, 10], ['Lorensborgsgatan', 318, 381, 89, 10],
  ['Lorensborgsgatan', 183, 656, -50, 11], ['Pildammsvägen', 498, 662, -86, 11],
  ['Axel Danielssons väg', 518, 641, -85, 10], ['Trelleborgsvägen', 688, 590, -78, 12, '#5c4a2c'],
  ['Munkhättegatan', 783, 611, -80, 10],
];

const signs: [string, number, number][] = [
  ['Trafikplats', 724, 478], ['Lindeborg', 725, 489], ['Trafikplats', 738, 526], ['Söderkulla', 738, 537],
  ['Trafikplats', 686, 609], ['Lindeborg', 687, 620], ['Trafikplats', 672, 642], ['Petersborg', 672, 653],
  ['Trafikplats', 213, 811],
];

const PIN = 'M0 0 C-1 -6 -10 -11 -10 -19 A10 10 0 0 1 10 -19 C10 -11 1 -6 0 0Z';

const Pin = ({ x, y, color, children }: { x: number; y: number; color: string; children?: React.ReactNode }) => (
  <g transform={`translate(${x} ${y})`}>
    <path d={PIN} fill={color} stroke="#fff" strokeOpacity={0.5} strokeWidth={0.6} />
    {children}
  </g>
);

const Bag = () => (
  <g>
    <rect x={-5} y={-21} width={10} height={8} rx={1} fill="#fff" />
    <path d="M-3 -21 V-22 A3 3 0 0 1 3 -22 V-21" fill="none" stroke="#fff" strokeWidth={1.4} />
    <path d="M-2 -18 A2 2 0 0 0 2 -18" fill="none" stroke="#7e9bcd" strokeWidth={1.2} />
  </g>
);

const CityMap = () => (
  <MapSvg viewBox="0 261 799 548" preserveAspectRatio="xMinYMin slice" role="img" aria-label="Map of Hyllie, Malmö">
    <defs>
      <path id="annetorp-west" d="M77 402 Q112 414 148 434" />
      <path id="annetorp-east" d="M393 459 Q432 443 478 441" />
    </defs>
    <rect y={261} width={799} height={548} fill="#e8eaec" />
    <path d="M362 483 H396 V500 L421 484 L419 519 H425 V532 L428 546 V562 H407 L405 546 L393 534 H355Z" fill="#f6f1e6" />
    <path d="M650 418 L684 424 L683 433 L650 427Z" fill="#e2e3e5" />
    {tiles.map((t) => <MapTile key={`${t.x}-${t.y}`} tile={t} />)}
    {roundabouts.map(([x, y, r]) => (
      <circle key={`${x}-${y}`} cx={x} cy={y} r={r - 1} fill="#e3e5e7" stroke="#fff" strokeWidth={3} />
    ))}

    {signs.map(([t, x, y]) => (
      <g key={`${x}-${y}`}>
        <rect x={x - (t === 'Lindeborg' ? 22 : 23)} y={y - 6} width={t === 'Lindeborg' ? 44 : 46} height={11} fill="#d9c98a" stroke="#b5a469" />
        <text x={x} y={y + 3} textAnchor="middle" fontSize={9} fill="#4d4126">{t}</text>
      </g>
    ))}
    <rect x={57} y={741} width={22} height={11} fill="#6f8b5a" />
    <text x={68} y={749} textAnchor="middle" fontSize={8} fontWeight={700} fill="#fff">E20</text>

    {streets.map(([t, x, y, a, s, c]) => (
      <MapText key={`${t}${x}`} $size={s} $color={c ?? '#505458'} transform={`translate(${x} ${y}) rotate(${a})`}>{t}</MapText>
    ))}
    <MapText $size={11} $color="#505458"><textPath href="#annetorp-west">Annetorpsvägen</textPath></MapText>
    <MapText $size={12} $color="#5c4a2c"><textPath href="#annetorp-east">Annetorpsvägen</textPath></MapText>
    {districts.map(([t, x, y, s]) => (
      <MapText key={t} x={x} y={y} $size={s} $weight={500} $color="#4a4e52" $spaced>{t}</MapText>
    ))}
    {towns.map(([t, x, y]) => <MapText key={t} x={x} y={y} $size={16} $color="#1f2124">{t}</MapText>)}
    {places.map(([t, x, y, c, a]) => (
      <MapText key={t} x={x} y={y} textAnchor={a} $size={14} $color={c}>{t}</MapText>
    ))}

    <Pin x={344} y={381} color="#4b8a60"><circle cy={-19} r={4} fill="#fff" /></Pin>
    <Pin x={365} y={514} color="#7e9bcd"><Bag /></Pin>
    <Pin x={522} y={759} color="#7e9bcd"><Bag /></Pin>
    <Pin x={656} y={774} color="#7e9bcd"><Bag /></Pin>
    <Pin x={797} y={453} color="#b78439">
      <path d="M-5 -24 V-21 Q-5 -19 -3 -19 V-13 H-1 V-19 Q1 -19 1 -21 V-24Z" fill="#fff" />
    </Pin>
    <Pin x={728} y={797} color="#3b8c93">
      <path d="M-5 -25 H-3 V-23 H-1 V-25 H1 V-23 H3 V-25 H5 V-21 H3 V-16 H5 V-13 H-5 V-16 H-3 V-21 H-5Z" fill="#fff" />
    </Pin>

    <rect x={410} y={535} width={13} height={13} rx={2} fill="#4a77b8" />
    <path d="M413 538 Q413 537 414 537 H419 Q420 537 420 538 V544 L421 546 H419 L418 545 H415 L414 546 H412 L413 544Z" fill="#fff" />
    <path d="M414 539 H416 V541 H414Z M417 539 H419 V541 H417Z" fill="#4a77b8" />

    <path d="M399 561 C398 549 386 548 386 537 A13 13 0 0 1 412 537 C412 548 400 549 399 561Z" fill="#ea4335" stroke="#c5221f" strokeWidth={1} />
    <circle cx={399} cy={537} r={5} fill="#b31412" />
  </MapSvg>
);

const Emblem = () => (
  <svg width={58} height={60} viewBox="1 1 58 60" fill="none" stroke="#fff" aria-hidden="true">
    <g fill="#fff" stroke="none">
      <circle cx={4} cy={6} r={2.2} />
      <circle cx={4} cy={16} r={2.8} />
      <circle cx={13} cy={13} r={3.8} />
      <circle cx={47.500} cy={15} r={1.8} />
      <circle cx={9} cy={44} r={1.8} />
    </g>
    <path d="M33 49.500 A17.500 17.500 0 1 1 39 47.500" strokeWidth={2.600} />
    <path d="M23 9 A24.500 24.500 0 0 1 43 11 M50.500 18.500 A24 24 0 0 1 53 43 M8 24 A24.500 24.500 0 0 0 7.500 39 M11.500 47 A24.500 24.500 0 0 0 47 51 M49 31.500 H55 M24 48 L22 54" strokeWidth={2.400} />
    <path d="M25 24.500 H35 Q38.500 24.500 38.500 28 Q38.500 31 36 32 Q39 33 39 36 Q39 40 35 40 H25Z M24 32 H36" strokeWidth={3.600} />
  </svg>
);

const navItems = ['Home', 'About us', 'Trading account', 'Institutional', 'Smart portfolios', 'News', 'Partner area'];

export default function App() {
  return (
    <>
      <GlobalStyle />
      <Page>
        <BrowserBar>
          <BarButton $muted aria-label="Back">
            <svg width={14} height={14} viewBox="0 0 14 14" fill="none" stroke="currentColor" strokeWidth={1.600}><path d="M13 7 H2 M7 2 L2 7 L7 12" /></svg>
          </BarButton>
          <BarButton $muted aria-label="Forward">
            <svg width={14} height={14} viewBox="0 0 14 14" fill="none" stroke="currentColor" strokeWidth={1.600}><path d="M1 7 H12 M7 2 L12 7 L7 12" /></svg>
          </BarButton>
          <BarButton aria-label="Reload">
            <svg width={14} height={14} viewBox="0 0 14 14" fill="none" stroke="currentColor" strokeWidth={1.800}><path d="M12.500 8 A5.500 5.500 0 1 1 11 3.200 L12 4.500 M12.300 0.500 V5 H8" /></svg>
          </BarButton>
          <AddressBar>
            <SiteInfo aria-label="View site information">
              <svg width={14} height={12} viewBox="0 0 14 12" fill="none" stroke="#1f251e" strokeWidth={1.600}>
                <circle cx={3.500} cy={3} r={1.800} /><path d="M7 3 H13 M1 9 H7" /><circle cx={10.500} cy={9} r={1.800} />
              </svg>
            </SiteInfo>
            <AddressInput aria-label="Address" defaultValue="beta-tech.io" />
            <StarButton aria-label="Bookmark this page">
              <svg width={16} height={16} viewBox="0 0 16 16" fill="none" stroke="#444b43" strokeWidth={1.600}>
                <path d="M8 2 L9.700 6.100 L14 6.400 L10.700 9.200 L11.800 13.600 L8 11.200 L4.200 13.600 L5.300 9.200 L2 6.400 L6.300 6.100Z" />
              </svg>
            </StarButton>
          </AddressBar>
        </BrowserBar>

        <Header>
          <HeaderRow>
            <Brand href="#home"><Emblem />BETA-TECH.IO</Brand>
            <Nav>
              {navItems.map((item, i) => (
                <NavLink key={item} href="#" $active={i === 0}>{item}</NavLink>
              ))}
            </Nav>
          </HeaderRow>
          <HeaderRule />
        </Header>

        <Main>
          <MapPanel>
            <CityMap />
            <MapTypes>
              <MapTypeButton $active>Map</MapTypeButton>
              <MapTypeButton>Satellite</MapTypeButton>
            </MapTypes>
            <MapControl $top aria-label="Toggle fullscreen view">
              <svg width={18} height={18} viewBox="0 0 18 18" fill="none" stroke="#666" strokeWidth={2}>
                <path d="M1 6 V1 H6 M12 1 H17 V6 M17 12 V17 H12 M6 17 H1 V12" />
              </svg>
            </MapControl>
            <MapControl aria-label="Street View">
              <svg width={20} height={30} viewBox="0 0 20 30"><circle cx={10} cy={5} r={5} fill="#fbbc04" stroke="#d99a1e" /><path d="M4 12 H16 V20 H13 V29 H7 V20 H4Z" fill="#fbbc04" /></svg>
            </MapControl>
          </MapPanel>
          <Contact>
            <ContactTitle><strong>Beta-Tech</strong> Contact Details</ContactTitle>
            <ContactRule />
            <ContactLine>Address: Hyllie Stationstorg 31, 215 32 Malmö, Sweden</ContactLine>
            <ContactLine>Phone: +46 77 4218 824 (Group Switchboard)</ContactLine>
            <ContactLine>Email: <a href="mailto:partner@beta-tech.io">partner@beta-tech.io</a></ContactLine>
          </Contact>
        </Main>
      </Page>
    </>
  );
}
